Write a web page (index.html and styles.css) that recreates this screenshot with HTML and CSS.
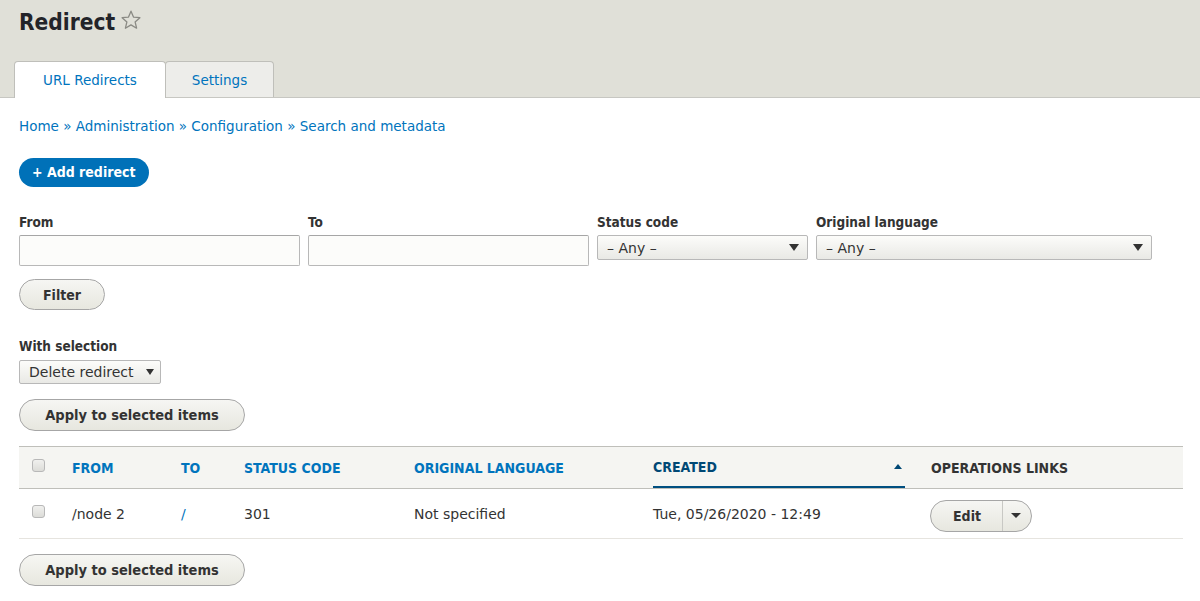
FILE: index.html
```html
<!DOCTYPE html>
<html lang="en">
<head>
<meta charset="utf-8">
<title>Redirect</title>
<link rel="stylesheet" href="styles.css">
</head>
<body>
<header class="page-header">
  <h1 class="page-title">Redirect <span class="star" aria-hidden="true"><svg width="22" height="22" viewBox="0 0 22 22"><path d="M11 2.2l2.6 6 6.3.5-4.8 4.2 1.5 6.3L11 15.9l-5.6 3.3 1.5-6.3L2.1 8.7l6.3-.5z" fill="none" stroke="#8a8a84" stroke-width="1.3" stroke-linejoin="round"/></svg></span></h1>
  <ul class="tabs">
    <li class="tab is-active"><a href="#">URL Redirects</a></li>
    <li class="tab"><a href="#">Settings</a></li>
  </ul>
</header>
<main class="content">
  <nav class="breadcrumb">
    <a href="#">Home</a> » <a href="#">Administration</a> » <a href="#">Configuration</a> » <a href="#">Search and metadata</a>
  </nav>
  <div class="actions"><a class="btn-primary" href="#">+ Add redirect</a></div>

  <div class="filters">
    <div class="field field-from">
      <label>From</label>
      <input class="text" type="text">
    </div>
    <div class="field field-to">
      <label>To</label>
      <input class="text" type="text">
    </div>
    <div class="field field-status">
      <label>Status code</label>
      <div class="select">– Any –<span class="caret"></span></div>
    </div>
    <div class="field field-lang">
      <label>Original language</label>
      <div class="select">– Any –<span class="caret"></span></div>
    </div>
  </div>
  <div class="row-btn filter-row"><button class="btn">Filter</button></div>

  <div class="bulk">
    <label>With selection</label>
    <div class="select select-inline">Delete redirect<span class="caret"></span></div>
  </div>
  <div class="row-btn apply-top"><button class="btn">Apply to selected items</button></div>

  <table class="list">
    <colgroup>
      <col style="width:41px"><col style="width:109px"><col style="width:63px"><col style="width:170px"><col style="width:239px"><col style="width:278px"><col style="width:264px">
    </colgroup>
    <thead>
      <tr>
        <th><span class="checkbox"></span></th>
        <th><a href="#">From</a></th>
        <th><a href="#">To</a></th>
        <th><a href="#">Status code</a></th>
        <th><a href="#">Original language</a></th>
        <th class="is-active"><a href="#">Created<span class="sort"></span></a></th>
        <th class="plain">Operations links</th>
      </tr>
    </thead>
    <tbody>
      <tr>
        <td><span class="checkbox"></span></td>
        <td>/node 2</td>
        <td><a href="#">/</a></td>
        <td>301</td>
        <td>Not specified</td>
        <td>Tue, 05/26/2020 - 12:49</td>
        <td>
          <div class="dropbutton"><span class="db-main">Edit</span><span class="db-toggle"><span class="caret"></span></span></div>
        </td>
      </tr>
    </tbody>
  </table>
  <div class="row-btn apply-bottom"><button class="btn">Apply to selected items</button></div>
</main>
</body>
</html>
```

FILE: styles.css
```css
html, body {
  margin: 0;
  padding: 0;
  background: #fff;
}
body {
  font-family: "DejaVu Sans", sans-serif;
  font-size: 13.5px;
  color: #333;
}
a {
  color: #0074bd;
  text-decoration: none;
}
.page-header {
  background: #e0e0d8;
  border-bottom: 1px solid #c7c7c2;
  padding: 0 0 0 14px;
  height: 97px;
  display: flex;
  flex-direction: column;
  justify-content: space-between;
}
.page-title {
  margin: 6px 0 0 5px;
  font-family: "DejaVu Sans Condensed", "DejaVu Sans", sans-serif;
  font-size: 22.5px;
  line-height: 32px;
  font-weight: 600;
  color: #232429;
  display: flex;
  align-items: center;
  gap: 5px;
}
.star {
  display: inline-flex;
  margin-top: -4px;
}
.tabs {
  list-style: none;
  margin: 0 0 -1px 0;
  padding: 0;
  display: flex;
}
.tab {
  height: 35px;
  border: 1px solid #bfbfba;
  border-bottom: none;
  border-radius: 4px 4px 0 0;
  background: #ededea;
  display: flex;
  align-items: center;
  justify-content: center;
  margin-right: -1px;
}
.tab a {
  font-size: 13.5px;
  color: #0074bd;
}
.tab.is-active {
  background: #fff;
  width: 150px;
  height: 36px;
  position: relative;
  z-index: 1;
}
.tab:not(.is-active) {
  width: 107px;
}
.content {
  padding: 17px 17px 0 19px;
}
.breadcrumb {
  font-size: 13.5px;
  line-height: 22px;
  color: #0074bd;
}
.actions {
  margin-top: 21px;
  height: 29px;
}
.btn-primary {
  display: inline-block;
  box-sizing: border-box;
  height: 29px;
  background: #0071b8;
  color: #fff;
  font-family: "DejaVu Sans Condensed", "DejaVu Sans", sans-serif;
  font-weight: bold;
  font-size: 14px;
  line-height: 29px;
  padding: 0 14px 0 13px;
  border-radius: 20px;
}
.filters {
  margin-top: 26px;
  display: flex;
  gap: 8px;
}
.field label, .bulk label {
  display: block;
  font-family: "DejaVu Sans Condensed", "DejaVu Sans", sans-serif;
  font-weight: bold;
  font-size: 13.5px;
  line-height: 18px;
  color: #333;
  margin-bottom: 4px;
}
.field-from, .field-to { width: 281px; }
.field-status { width: 211px; }
.field-lang { width: 336px; }
.text {
  box-sizing: border-box;
  display: block;
  width: 100%;
  height: 31px;
  border: 1px solid #b8b8b8;
  border-top-color: #a6a6a6;
  border-radius: 2px;
  background: #fcfcfa;
  margin: 0;
  font: inherit;
}
.select {
  box-sizing: border-box;
  height: 25px;
  border: 1px solid #b8b8b8;
  border-radius: 2px;
  background: linear-gradient(#fcfcfa, #e9e9e5);
  font-size: 14px;
  color: #333;
  padding: 0 8px 0 9px;
  display: flex;
  align-items: center;
  justify-content: space-between;
}
.caret {
  width: 0;
  height: 0;
  border-left: 5px solid transparent;
  border-right: 5px solid transparent;
  border-top: 7px solid #333;
}
.select-inline {
  display: inline-flex;
  width: 142px;
  height: 24px;
  padding-right: 6px;
}
.select-inline .caret {
  border-left-width: 4.5px;
  border-right-width: 4.5px;
  border-top-width: 6px;
}
.btn {
  box-sizing: border-box;
  height: 31px;
  padding: 0 22px;
  border: 1px solid #a6a6a6;
  border-radius: 20px;
  background: linear-gradient(#f6f6f3, #e7e7df);
  color: #333;
  font-family: "DejaVu Sans Condensed", "DejaVu Sans", sans-serif;
  font-size: 14px;
  font-weight: bold;
  cursor: pointer;
  margin: 0;
  display: block;
}
.filter-row { margin-top: 13px; }
.filter-row .btn { width: 86px; padding: 0; }
.bulk {
  margin-top: 27px;
}
.bulk label { margin-bottom: 5px; }
.apply-top { margin-top: 15px; }
.apply-top .btn, .apply-bottom .btn {
  width: 226px;
  height: 32px;
  font-size: 14.5px;
  padding: 0;
}
.list {
  margin-top: 15px;
  border-collapse: collapse;
  table-layout: fixed;
  width: 1164px;
}
.list th {
  background: #f5f5f2;
  border-top: 1px solid #bfbfba;
  border-bottom: 1px solid #bfbfba;
  text-align: left;
  text-transform: uppercase;
  font-family: "DejaVu Sans Condensed", "DejaVu Sans", sans-serif;
  font-weight: bold;
  font-size: 14px;
  height: 41px;
  padding: 0 12px;
  color: #333;
  vertical-align: middle;
}
.list th a {
  color: #0074bd;
}
.list th.is-active a {
  color: #004875;
  display: flex;
  align-items: center;
  justify-content: space-between;
  box-sizing: border-box;
  height: 42px;
  padding-top: 1px;
  margin-bottom: -1px;
  border-bottom: 3px solid #004f80;
  padding-right: 3px;
  margin-right: 2px;
}
.sort {
  width: 0;
  height: 0;
  border-left: 4px solid transparent;
  border-right: 4px solid transparent;
  border-bottom: 5px solid #004875;
  margin-top: -1px;
}
.list td {
  height: 49px;
  padding: 0 12px;
  border-bottom: 1px solid #e6e4df;
  font-size: 14px;
  color: #333;
  vertical-align: middle;
}
.checkbox {
  display: block;
  width: 11px;
  height: 11px;
  border: 1px solid #b8b8b8;
  border-radius: 3px;
  background: linear-gradient(#f0f0ee, #dcdcd8);
  margin: -5px 0 0 1px;
}
.dropbutton {
  display: inline-flex;
  box-sizing: border-box;
  height: 32px;
  border: 1px solid #a6a6a6;
  border-radius: 20px;
  background: linear-gradient(#f6f6f3, #e7e7df);
  overflow: hidden;
  margin-left: -1px;
  margin-top: 4px;
  font-family: "DejaVu Sans Condensed", "DejaVu Sans", sans-serif;
}
.db-main {
  font-weight: bold;
  width: 70px;
  display: flex;
  align-items: center;
  justify-content: center;
  padding-left: 1px;
}
.db-toggle {
  width: 28px;
  border-left: 1px solid #c8c8c4;
  display: flex;
  align-items: center;
  justify-content: center;
}
.db-toggle .caret {
  border-left-width: 5px;
  border-right-width: 5px;
  border-top-width: 5px;
  margin-left: -2px;
}
.apply-bottom { margin-top: 15px; }
```
